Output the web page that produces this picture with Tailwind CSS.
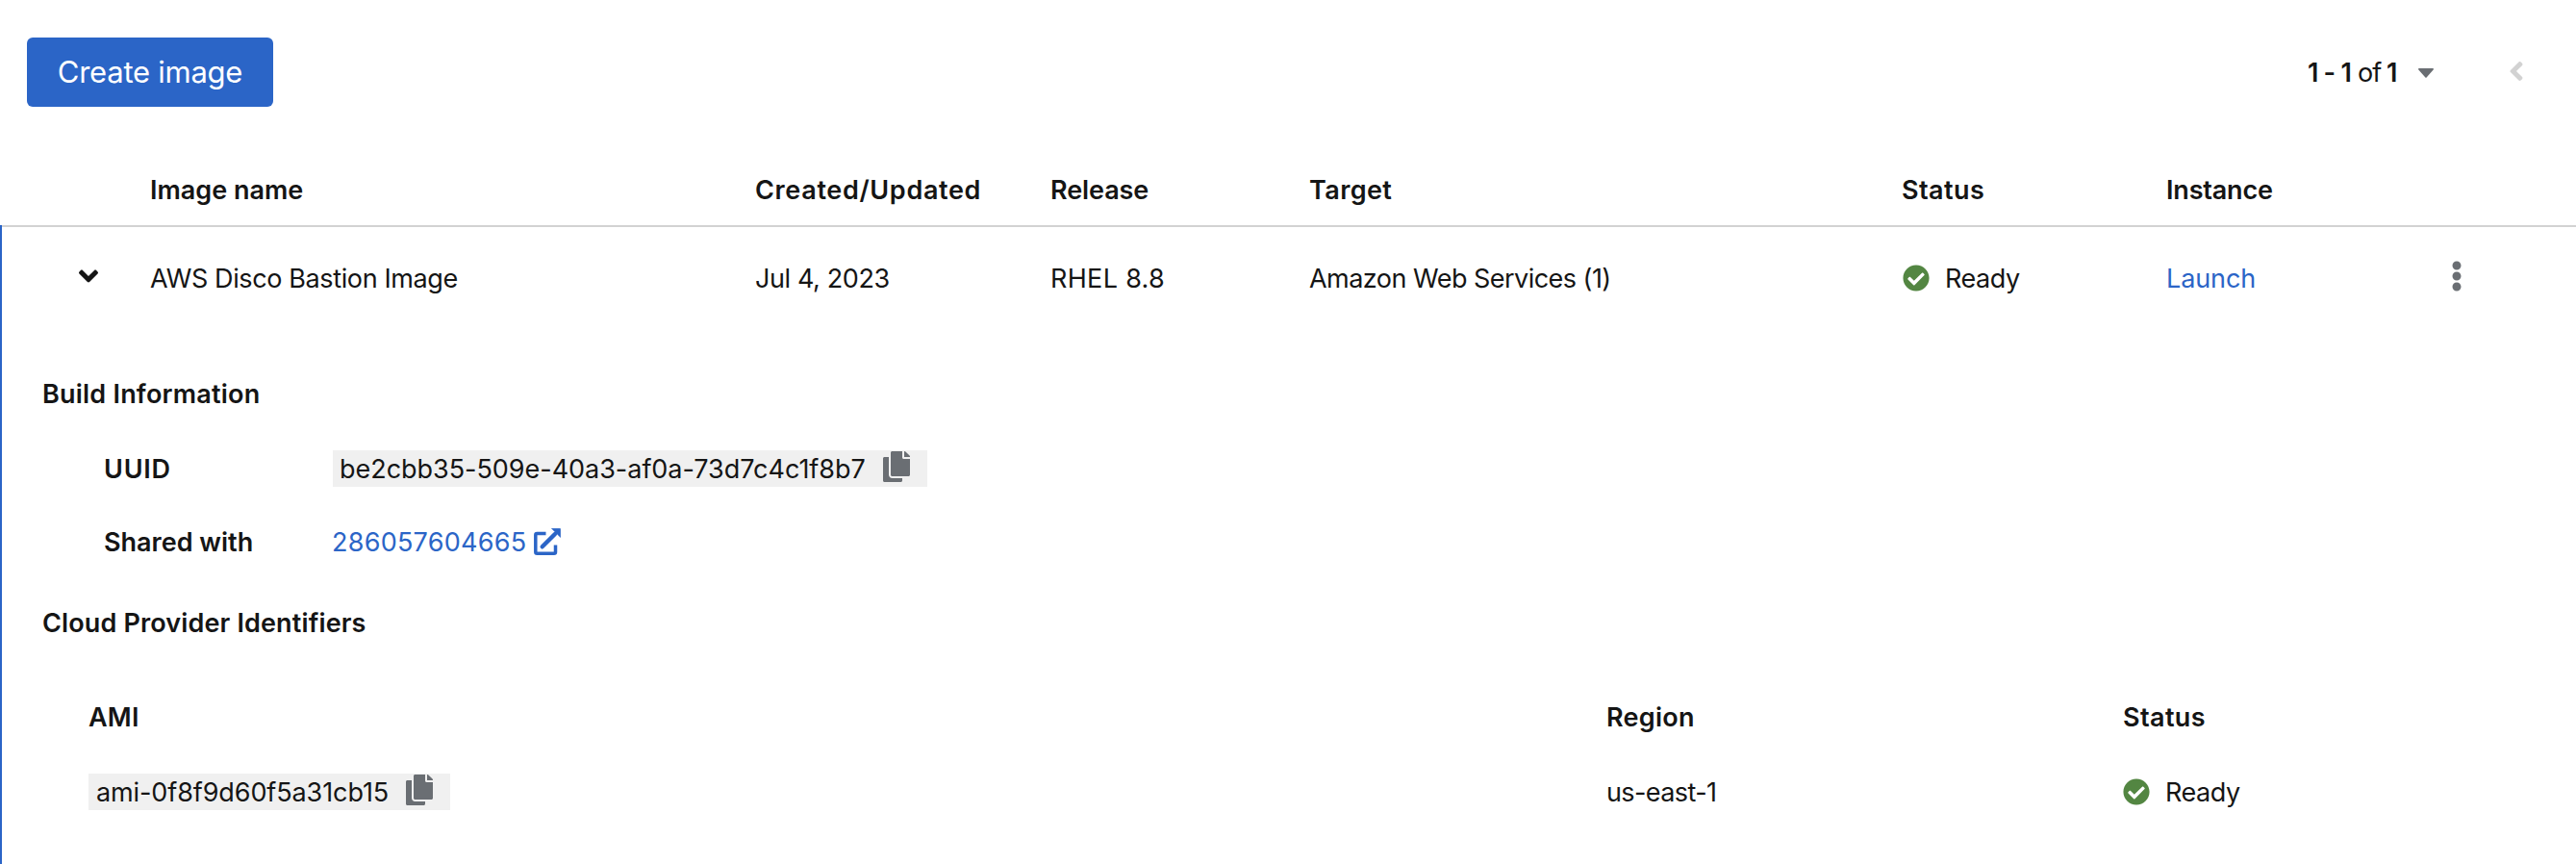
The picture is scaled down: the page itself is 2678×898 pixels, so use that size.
<!DOCTYPE html>
<html lang="en">
<head>
<meta charset="utf-8">
<title>Images</title>
<script src="https://cdn.jsdelivr.net/npm/@tailwindcss/browser@4"></script>
</head>
<body class="bg-white">
<svg class="hidden" xmlns="http://www.w3.org/2000/svg">
  <symbol id="check" viewBox="0 0 512 512"><path d="M504 256c0 136.967-111.033 248-248 248S8 392.967 8 256 119.033 8 256 8s248 111.033 248 248zM227.314 387.314l184-184c6.248-6.248 6.248-16.379 0-22.627l-22.627-22.627c-6.248-6.249-16.379-6.249-22.628 0L216 308.118l-70.059-70.059c-6.248-6.248-16.379-6.248-22.628 0l-22.627 22.627c-6.248 6.248-6.248 16.379 0 22.627l104 104c6.249 6.249 16.379 6.249 22.628.001z"/></symbol>
  <symbol id="copy" viewBox="0 0 448 512"><path d="M320 448v40c0 13.255-10.745 24-24 24H24c-13.255 0-24-10.745-24-24V120c0-13.255 10.745-24 24-24h72v296c0 30.879 25.121 56 56 56h168zm0-344V0H152c-13.255 0-24 10.745-24 24v368c0 13.255 10.745 24 24 24h272c13.255 0 24-10.745 24-24V128H344c-13.2 0-24-10.8-24-24zm120.971-31.029L375.029 7.029A24 24 0 0 0 358.059 0H352v96h96v-6.059a24 24 0 0 0-7.029-16.97z"/></symbol>
</svg>
<div class="h-[898px] w-[2678px] overflow-hidden font-[Inter,sans-serif] text-[27px] leading-[42px] whitespace-nowrap text-[#151515]">

  <div class="flex h-[150px] items-center justify-between pl-7 pr-[54px]">
    <button class="flex h-[72px] w-[256px] items-center justify-center rounded-[6px] bg-[#2b65c7] text-[31px] tracking-[-0.25px] text-white">Create image</button>
    <div class="flex items-center">
      <div class="flex w-[115px] pt-px"><span class="w-[52px] font-semibold tracking-[-0.8px]">1 - 1</span><span class="w-[30px] tracking-[-1px]">of</span><span class="font-semibold">1</span></div>
      <svg class="mt-0.5 mr-[78px] h-[10px] w-4 fill-[#6a6e73]" viewBox="0 0 16 10"><path d="M.9 0h14.2c.8 0 1.2.8.6 1.4L8.6 9.4c-.3.4-.9.4-1.2 0L.3 1.4C-.3.8.1 0 .9 0z"/></svg>
      <svg class="mt-[-2px] h-8 w-4 fill-[#d2d2d2]" viewBox="0 0 256 512"><path d="M31.7 239l136-136c9.4-9.4 24.6-9.4 33.9 0l22.6 22.6c9.4 9.4 9.4 24.6 0 33.9L127.9 256l96.4 96.4c9.4 9.4 9.4 24.6 0 33.9L201.7 409c-9.4 9.4-24.6 9.4-33.9 0l-136-136c-9.5-9.4-9.5-24.6-.1-34z"/></svg>
    </div>
  </div>

  <div class="grid h-[84px] grid-cols-[156px_629px_307px_269px_616px_275px_1fr] items-center pt-3 font-semibold">
    <span></span>
    <span>Image name</span>
    <span class="tracking-[0.66px]">Created/Updated</span>
    <span class="tracking-[-0.1px]">Release</span>
    <span class="tracking-[0.4px]">Target</span>
    <span class="tracking-[0.44px]">Status</span>
    <span class="tracking-[-0.18px]">Instance</span>
  </div>

  <div class="h-[664px] border-l-2 border-[#2b65c7]">
    <div class="grid h-[108px] grid-cols-[154px_629px_307px_269px_617px_274px_296px_1fr] items-center border-t-2 border-[#d2d2d2]">
      <svg class="mt-[-4px] ml-20 h-8 w-5 fill-[#151515]" viewBox="0 0 320 512"><path d="M143 352.3L7 216.3c-9.4-9.4-9.4-24.6 0-33.9l22.6-22.6c9.4-9.4 24.6-9.4 33.9 0l96.4 96.4 96.4-96.4c9.4-9.4 24.6-9.4 33.9 0l22.6 22.6c9.4 9.4 9.4 24.6 0 33.9l-136 136c-9.2 9.4-24.4 9.4-33.8 0z"/></svg>
      <span class="pt-0.5 tracking-[-0.38px]">AWS Disco Bastion Image</span>
      <span class="pt-0.5 tracking-[-0.39px]">Jul 4, 2023</span>
      <span class="pt-0.5 tracking-[0.32px]">RHEL 8.8</span>
      <span class="pt-0.5 tracking-[-0.53px]">Amazon Web Services (1)</span>
      <span class="flex items-center gap-4 tracking-[-0.45px]"><svg class="size-7 fill-[#538642]"><use href="#check"/></svg><span class="pt-0.5">Ready</span></span>
      <a class="pt-0.5 tracking-[-0.1px] text-[#2b65c7]">Launch</a>
      <svg class="mt-[-4px] h-8 w-3 fill-[#6a6e73]" viewBox="0 0 192 512"><path d="M96 184c39.8 0 72 32.2 72 72s-32.2 72-72 72-72-32.2-72-72 32.2-72 72-72zM24 80c0 39.8 32.2 72 72 72s72-32.2 72-72S135.8 8 96 8 24 40.2 24 80zm0 352c0 39.8 32.2 72 72 72s72-32.2 72-72-32.2-72-72-72-72 32.2-72 72z"/></svg>
    </div>

    <h3 class="mt-[47px] pl-[42px] font-semibold tracking-[0.22px]">Build Information</h3>
    <dl class="mt-[34px] grid grid-cols-[238px_1fr] items-center gap-y-8 pl-[106px]">
      <dt class="pt-0.5 font-semibold tracking-[0.76px]">UUID</dt>
      <dd class="flex"><span class="flex h-[38px] w-[618px] justify-between bg-[#f0f0f0] pr-[18px] pl-[7px] leading-10 tracking-[-0.03px]">be2cbb35-509e-40a3-af0a-73d7c4c1f8b7<svg class="mt-px h-8 w-7 fill-[#6a6e73]"><use href="#copy"/></svg></span></dd>
      <dt class="pt-0.5 font-semibold">Shared with</dt>
      <dd class="flex items-center text-[#2b65c7]"><span class="ml-[-1px] w-[210px] pt-0.5 tracking-[0.25px]">286057604665</span>
        <svg class="size-7" viewBox="0 0 28 28" fill="none" stroke="#2b65c7"><path d="M12.5 5.5H3.3A1.5 1.5 0 0 0 1.8 7v17.7a1.5 1.5 0 0 0 1.5 1.5H21a1.5 1.5 0 0 0 1.5-1.5V17.5" stroke-width="3.5"/><path d="M8.7 19.3 22 6" stroke-width="4.4" stroke-linecap="round"/><path d="M18.5.3h8.2a1 1 0 0 1 1 1v8.2z" fill="#2b65c7" stroke-width=".6" stroke-linejoin="round"/></svg>
      </dd>
    </dl>
    <h3 class="mt-[42px] pl-[42px] font-semibold tracking-[0.14px]">Cloud Provider Identifiers</h3>

    <div class="mt-[56px] grid grid-cols-[1578px_536px_1fr] items-center gap-y-[34px] pl-[90px]">
      <span class="font-semibold tracking-[0.23px]">AMI</span>
      <span class="font-semibold tracking-[0.27px]">Region</span>
      <span class="pl-px font-semibold tracking-[0.4px]">Status</span>
      <span class="flex"><span class="flex h-[38px] w-[376px] justify-between bg-[#f0f0f0] pr-[18px] pl-2 leading-10 tracking-[-0.1px]">ami-0f8f9d60f5a31cb15<svg class="mt-px h-8 w-7 fill-[#6a6e73]"><use href="#copy"/></svg></span></span>
      <span class="pt-0.5 tracking-[-0.6px]">us-east-1</span>
      <span class="flex items-center gap-4 pl-px tracking-[-0.45px]"><svg class="size-7 fill-[#538642]"><use href="#check"/></svg><span class="pt-0.5">Ready</span></span>
    </div>
  </div>
</div>
</body>
</html>
